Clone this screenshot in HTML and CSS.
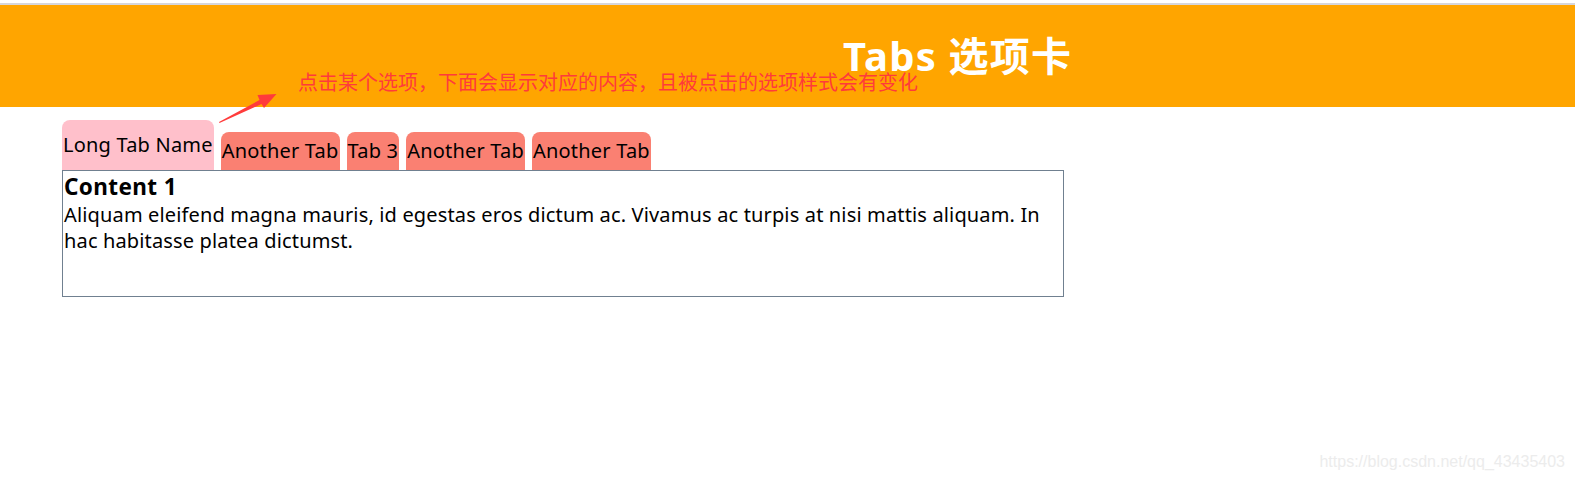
FILE: index.html
```html
<!DOCTYPE html>
<html lang="zh-CN">
<head>
<meta charset="utf-8">
<title>Tabs 选项卡</title>
<link rel="stylesheet" href="styles.css">
</head>
<body>
<div class="topline"></div>
<header class="header">
  <h1 class="title">Tabs 选项卡</h1>
</header>
<main class="page">
  <div class="tabs">
    <div class="tab active">Long Tab Name</div>
    <div class="tab">Another Tab</div>
    <div class="tab">Tab 3</div>
    <div class="tab">Another Tab</div>
    <div class="tab">Another Tab</div>
  </div>
  <section class="panel">
    <h3 class="panel-title">Content 1</h3>
    <p class="panel-text">Aliquam eleifend magna mauris, id egestas eros dictum ac. Vivamus ac turpis at nisi mattis aliquam. In hac habitasse platea dictumst.</p>
  </section>
</main>
<div class="note">点击某个选项，下面会显示对应的内容，且被点击的选项样式会有变化</div>
<svg class="arrow" width="70" height="40" viewBox="210 88 70 40">
  <polygon points="219,122 259.5,100 257.5,95 276.5,94 264,108 261.5,104 219.5,123" fill="#ff3b3b"/>
</svg>
<div class="watermark">https://blog.csdn.net/qq_43435403</div>
</body>
</html>
```

FILE: styles.css
```css
html, body {
  margin: 0;
  padding: 0;
  background: #ffffff;
}
body {
  font-family: "Noto Sans", "Noto Sans CJK SC", sans-serif;
  color: #000;
  width: 1575px;
  height: 482px;
  overflow: hidden;
  position: relative;
}
.topline {
  height: 3px;
  border-bottom: 2px solid #d6d6db;
}
.header {
  background: #ffa500;
  height: 102px;
  box-sizing: border-box;
  padding: 27px 0 0 843px;
}
.title {
  margin: 0;
  font-family: "Noto Sans", "Noto Sans CJK SC", sans-serif;
  font-weight: 700;
  font-size: 40px;
  line-height: 48px;
  letter-spacing: 1.2px;
  color: #ffffff;
  white-space: nowrap;
}
.page {
  padding: 13px 0 0 62px;
}
.tabs {
  display: flex;
  align-items: flex-end;
  gap: 7px;
  height: 50px;
}
.tab {
  background: #fa8072;
  border-radius: 8px 8px 0 0;
  font-size: 20px;
  line-height: 26px;
  letter-spacing: 0.2px;
  padding: 6px 1px;
  white-space: nowrap;
}
.tab.active {
  background: #ffc0cb;
  padding: 12px 1px;
}
.panel {
  width: 1002px;
  height: 127px;
  box-sizing: border-box;
  border: 1px solid #708090;
  padding: 0 1px;
}
.panel-title {
  margin: 2px 0 0;
  font-size: 22.5px;
  line-height: 28px;
  letter-spacing: 0.4px;
  font-weight: 700;
}
.panel-text {
  margin: 1px 0 0;
  font-size: 20px;
  line-height: 26px;
  letter-spacing: 0.15px;
}
.note {
  position: absolute;
  left: 298px;
  top: 72px;
  font-family: "Noto Sans CJK SC", sans-serif;
  font-size: 20px;
  line-height: 20px;
  color: #ff3b3b;
  white-space: nowrap;
}
.arrow {
  position: absolute;
  left: 210px;
  top: 88px;
}
.watermark {
  position: absolute;
  right: 10px;
  top: 452px;
  font-family: "Liberation Sans", Arial, sans-serif;
  font-size: 16px;
  line-height: 20px;
  color: #ececec;
  white-space: nowrap;
}
```
